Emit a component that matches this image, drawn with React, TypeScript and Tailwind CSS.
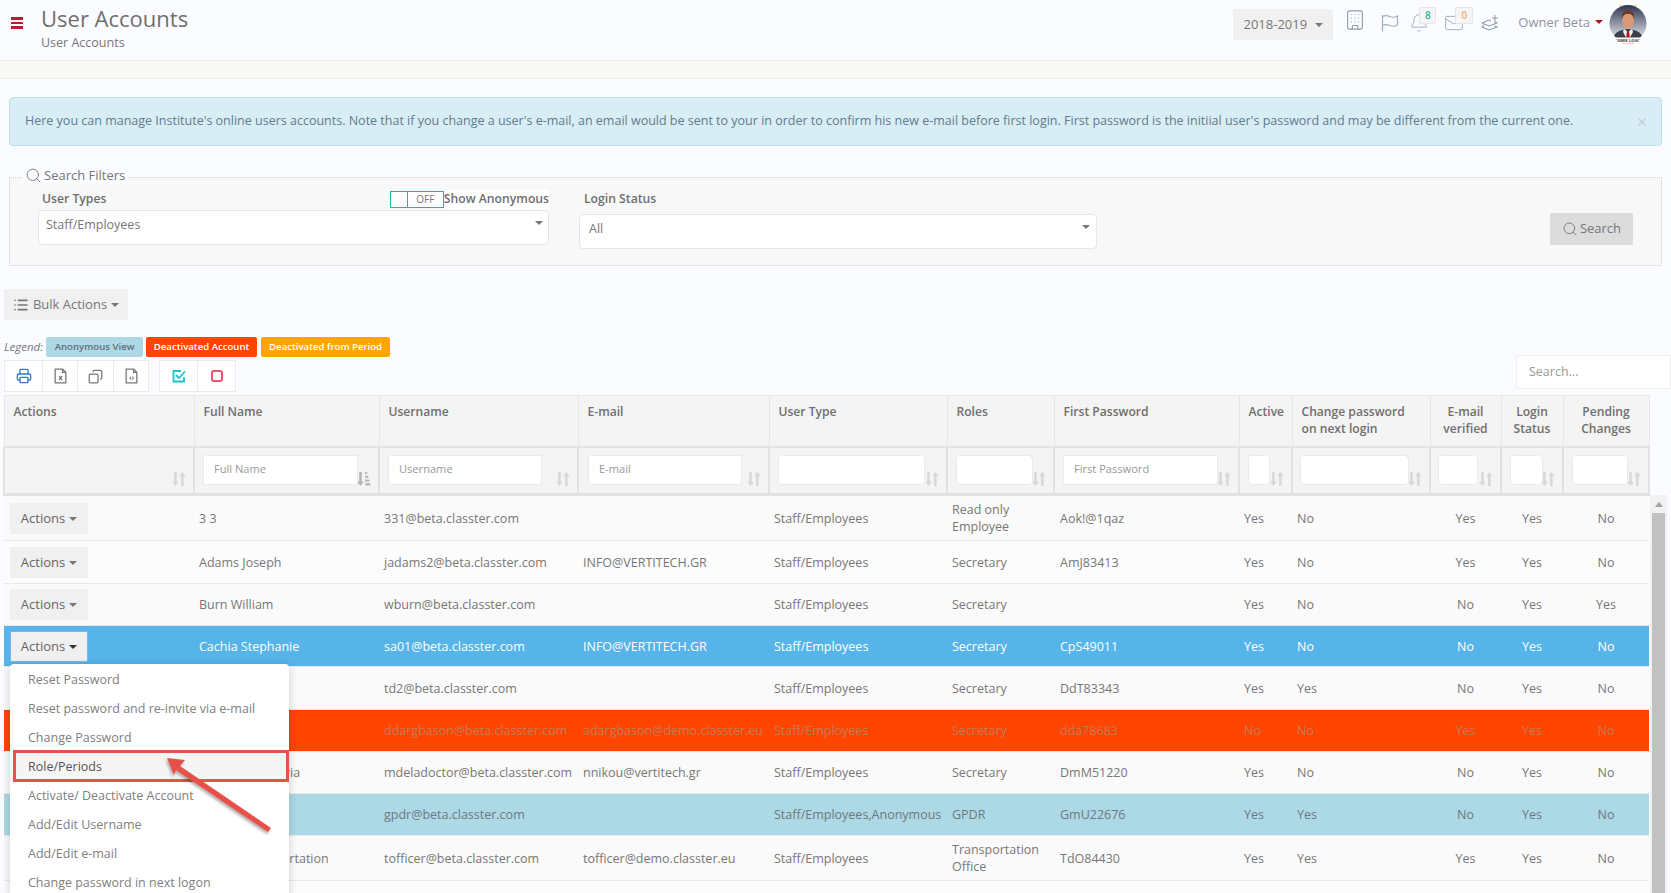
import React from "react";
import { Search, List, Printer, Copy, X, Building, Bell, Mail } from "lucide-react";

const cols = [190, 185, 199, 191, 178, 107, 185, 53, 138, 71, 62, 86];

type Row = { cells: string[]; h: string; kind?: "sel" | "red" | "blue" };

const rows: Row[] = [
  { h: "h-[46px]", cells: ["3 3", "331@beta.classter.com", "", "Staff/Employees", "Read only Employee", "Aok!@1qaz", "Yes", "No", "Yes", "Yes", "No"] },
  { h: "h-[43px]", cells: ["Adams Joseph", "jadams2@beta.classter.com", "INFO@VERTITECH.GR", "Staff/Employees", "Secretary", "AmJ83413", "Yes", "No", "Yes", "Yes", "No"] },
  { h: "h-[42px]", cells: ["Burn William", "wburn@beta.classter.com", "", "Staff/Employees", "Secretary", "", "Yes", "No", "No", "Yes", "Yes"] },
  { h: "h-[41px]", kind: "sel", cells: ["Cachia Stephanie", "sa01@beta.classter.com", "INFO@VERTITECH.GR", "Staff/Employees", "Secretary", "CpS49011", "Yes", "No", "No", "Yes", "No"] },
  { h: "h-[43px]", cells: ["", "td2@beta.classter.com", "", "Staff/Employees", "Secretary", "DdT83343", "Yes", "Yes", "No", "Yes", "No"] },
  { h: "h-[42px]", kind: "red", cells: ["", "ddargbason@beta.classter.com", "adargbason@demo.classter.eu", "Staff/Employees", "Secretary", "dda78683", "No", "No", "Yes", "Yes", "No"] },
  { h: "h-[42px]", cells: ["Deladoctor Maria", "mdeladoctor@beta.classter.com", "nnikou@vertitech.gr", "Staff/Employees", "Secretary", "DmM51220", "Yes", "No", "No", "Yes", "No"] },
  { h: "h-[42px]", kind: "blue", cells: ["", "gpdr@beta.classter.com", "", "Staff/Employees,Anonymous", "GPDR", "GmU22676", "Yes", "Yes", "No", "Yes", "No"] },
  { h: "h-[45px]", cells: ["Officer Transportation", "tofficer@beta.classter.com", "tofficer@demo.classter.eu", "Staff/Employees", "Transportation Office", "TdO84430", "Yes", "Yes", "Yes", "Yes", "No"] },
  { h: "h-[42px]", cells: ["", "", "", "", "", "", "", "", "", "", ""] },
];

const heads: { t: React.ReactNode; c?: boolean }[] = [
  { t: "Actions" }, { t: "Full Name" }, { t: "Username" }, { t: "E-mail" }, { t: "User Type" }, { t: "Roles" },
  { t: "First Password" }, { t: "Active" }, { t: <>Change password<br />on next login</> },
  { t: <>E-mail<br />verified</>, c: true }, { t: <>Login<br />Status</>, c: true }, { t: <>Pending<br />Changes</>, c: true },
];

const filters: { ph?: string; w: string; ml: string; r?: boolean }[] = [
  { w: "", ml: "" },
  { ph: "Full Name", w: "w-[155px]", ml: "ml-[8px]" },
  { ph: "Username", w: "w-[154px]", ml: "ml-[8px]" },
  { ph: "E-mail", w: "w-[154px]", ml: "ml-[9px]" },
  { w: "w-[147px]", ml: "ml-[8px]", r: true },
  { w: "w-[77px]", ml: "ml-[8px]", r: true },
  { ph: "First Password", w: "w-[155px]", ml: "ml-[8px]" },
  { w: "w-[22px]", ml: "ml-[8px]", r: true },
  { w: "w-[109px]", ml: "ml-[7px]", r: true },
  { w: "w-[40px]", ml: "ml-[7px]", r: true },
  { w: "w-[33px]", ml: "ml-[8px]", r: true },
  { w: "w-[56px]", ml: "ml-[8px]", r: true },
];

const menu = ["Reset Password", "Reset password and re-invite via e-mail", "Change Password", "Role/Periods", "Activate/ Deactivate Account", "Add/Edit Username", "Add/Edit e-mail", "Change password in next logon"];

function SortIcon({ active }: { active?: boolean }) {
  return (
    <svg width="14" height="16" viewBox="0 0 13 15" className={active ? "text-[#b5b5b5]" : "text-[#d8d8d8]"} fill="currentColor">
      {active ? (
        <>
          <path d="M2 1h2.4v9H6.4L3.2 14 0 10h2z" />
          <rect x="7.5" y="1" width="2" height="2" />
          <rect x="7.5" y="4.5" width="3" height="2" />
          <rect x="7.5" y="8" width="4" height="2" />
          <rect x="7.5" y="11.5" width="5" height="2" />
        </>
      ) : (
        <>
          <path d="M2 1h2.4v9H6.4L3.2 14 0 10h2z" />
          <path d="M8.4 14h2.4V5h2L9.6 1 6.6 5h1.8z" />
        </>
      )}
    </svg>
  );
}

function Caret({ cls }: { cls: string }) {
  return <span className={`inline-block w-0 h-0 border-x-[4px] border-x-transparent border-t-[4px] ${cls}`} />;
}

function DocIcon({ label }: { label: string }) {
  return (
    <svg width="13" height="16" viewBox="0 0 12 15" fill="none" stroke="#777" strokeWidth="1.2">
      <path d="M1 1h7l3 3v10H1z" />
      <path d="M8 1v3h3" />
      <text x="6" y="11.5" fontSize="6.5" fill="#666" stroke="none" textAnchor="middle" fontFamily="'Open Sans', sans-serif" fontWeight="700">{label}</text>
    </svg>
  );
}

function Avatar() {
  return (
    <svg width="40" height="39" viewBox="0 0 40 39" className="shrink-0">
      <defs>
        <linearGradient id="avbg" x1="0" y1="0" x2="0" y2="1">
          <stop offset="0" stopColor="#2e3550" />
          <stop offset="0.85" stopColor="#dfe2ea" />
        </linearGradient>
        <clipPath id="avclip"><circle cx="20" cy="18.5" r="18.5" /></clipPath>
      </defs>
      <path d="M11 1.2A18.5 18.5 0 0 1 29 1.2" stroke="#f2c94c" strokeWidth="1" fill="none" />
      <path d="M14 38.2h12" stroke="#f2c94c" strokeWidth="1" fill="none" />
      <g clipPath="url(#avclip)">
        <rect width="40" height="39" fill="url(#avbg)" />
        <path d="M5 36c0-8 5-11 15-12 10 1 15 4 15 12v3H5z" fill="#3c4048" />
        <path d="M16 24l4 3 4-3 1 3-5 9-5-9z" fill="#f2f2f2" />
        <path d="M19 26h2l1 8-2 3-2-3z" fill="#b5141e" />
        <ellipse cx="20" cy="15.5" rx="6" ry="8" fill="#d99a78" />
        <path d="M14 14c-1-6 3-9 6-9s7 3 6 9c-1-3-2-5-6-5s-5 2-6 5z" fill="#6b3c26" />
      </g>
      <rect x="5" y="32.5" width="30" height="5" fill="#fff" />
      <text x="20" y="36.6" fontSize="4" fontWeight="700" fill="#333" textAnchor="middle" fontFamily="'Open Sans', sans-serif">'GMIK LOGI'</text>
    </svg>
  );
}

export default function App() {
  return (
    <div className="relative h-[893px] w-[1671px] overflow-hidden bg-[#fafcff] text-[12.5px] text-[#777] font-['Open_Sans',sans-serif]">
      {/* Top bar */}
      <header className="flex h-[61px] items-start border-b border-[#eeeeec] bg-[#fbfcff]">
        <div className="ml-[11px] mt-[17px] flex w-[12px] flex-col gap-[2px]">
          <span className="h-[2.5px] bg-[#b5202f]" />
          <span className="h-[2.5px] bg-[#b5202f]" />
          <span className="h-[2.5px] bg-[#b5202f]" />
        </div>
        <div className="ml-[18px] mt-[3px]">
          <div className="text-[22px] leading-[31px] text-[#6f6f6f]">User Accounts</div>
          <div className="text-[12.5px] leading-[17px] text-[#777]">User Accounts</div>
        </div>
        <div className="ml-auto flex items-start">
          <button className="mt-[9px] flex h-[31px] w-[100px] items-center justify-center gap-[8px] bg-[#f0f0f0] text-[13px] text-[#777]">
            2018-2019 <Caret cls="border-t-[#777]" />
          </button>
          <Building className="ml-[11px] mt-[9px] text-[#8d9cab]" size={22} strokeWidth={1.2} />
          <svg className="ml-[15px] mt-[14px]" width="18" height="18" viewBox="0 0 18 18" fill="none" stroke="#9fb0c0" strokeWidth="1.2">
            <path d="M1.5 1v16.5" />
            <path d="M1.5 2.5c3-1.5 5-1 7 0s5 1 8-0.5v9c-3 1.5-6 1.5-8 0.5s-4-1.5-7 0" />
          </svg>
          <div className="relative ml-[10px] mt-[13px]">
            <Bell className="text-[#9fb0c0]" size={20} strokeWidth={1.2} />
            <span className="absolute left-[10px] top-[-6px] flex h-[17px] w-[17px] items-center justify-center rounded-[2px] border border-[#e6e6e6] bg-[#f5f5f5] text-[10px] font-semibold text-[#2bb5a0]">8</span>
          </div>
          <div className="relative ml-[15px] mt-[13px]">
            <Mail className="text-[#9fb0c0]" size={20} strokeWidth={1.2} />
            <span className="absolute left-[11px] top-[-6px] flex h-[17px] w-[18px] items-center justify-center rounded-[2px] border border-[#e6e6e6] bg-[#f5f5f5] text-[10px] font-semibold text-[#f5a96b]">0</span>
          </div>
          <svg className="ml-[17px] mt-[14px]" width="18" height="19" viewBox="0 0 18 19" fill="none" stroke="#8d9cab" strokeWidth="1.1">
            <path d="M1 9l7-3 2 1M1 9l7 3 8-3-3-1.5M1 13l7 3 8-3-2.5-1.2M3 11l-2 2" />
            <path d="M14 1v6M11 4h6" />
          </svg>
          <span className="ml-[19px] mt-[12px] text-[13px] leading-[20px] text-[#8f949c]">Owner Beta</span>
          <span className="ml-[5px] mt-[20px] flex"><Caret cls="border-t-[#b5141e]" /></span>
          <div className="ml-[5px] mr-[23px] mt-[5px]"><Avatar /></div>
        </div>
      </header>
      <div className="h-[18px] border-b border-[#eeeeec] bg-[#f8f8f5]" />

      {/* Alert */}
      <div className="mx-[9px] mt-[18px] flex h-[49px] items-center justify-between rounded-[4px] border border-[#bde0ec] bg-[#d9edf6] pl-[15px] pr-[12px] text-[12.5px] text-[#5f7c8c]">
        <span>Here you can manage Institute's online users accounts. Note that if you change a user's e-mail, an email would be sent to your in order to confirm his new e-mail before first login. First password is the initiial user's password and may be different from the current one.</span>
        <X size={14} className="text-[#c0d3dc]" strokeWidth={2.5} />
      </div>

      {/* Filters */}
      <fieldset className="mx-[9px] mt-[21px] h-[99px] border border-dotted border-[#cfcfcf] bg-[#f8f8f8] px-0">
        <legend className="ml-[12px] flex -translate-y-[2px] items-center gap-[2px] bg-[#fafcff] px-[3px] text-[13px] leading-[20px] text-[#777]">
          <Search size={17} strokeWidth={1.3} /> Search Filters
        </legend>
        <div className="flex items-start">
          <div className="ml-[28px] mt-[3px] w-[511px]">
            <div className="flex h-[19px] items-center justify-between">
              <span className="ml-[4px] text-[12.2px] font-semibold text-[#6f6f6f]">User Types</span>
              <div className="flex items-center">
                <div className="flex h-[17px] w-[54px] border border-[#1fb39a] bg-white">
                  <span className="w-[17px] border-r border-[#1fb39a]" />
                  <span className="flex-1 text-center text-[10px] leading-[15px] text-[#777]">OFF</span>
                </div>
                <span className="bg-white text-[12.2px] font-semibold text-[#6f6f6f]">Show Anonymous</span>
              </div>
            </div>
            <div className="mt-[1px] flex h-[35px] items-start justify-between rounded-[4px] border border-[#e4e6ea] bg-white pl-[7px] pr-[5px] pt-[5px]">
              <span>Staff/Employees</span>
              <span className="mt-[5px] flex"><Caret cls="border-t-[#777]" /></span>
            </div>
          </div>
          <div className="ml-[30px] mt-[3px] w-[518px]">
            <div className="ml-[5px] h-[19px] text-[12.2px] font-semibold text-[#6f6f6f]">Login Status</div>
            <div className="mt-[5px] flex h-[35px] items-start justify-between rounded-[4px] border border-[#e4e6ea] bg-white pl-[9px] pr-[6px] pt-[5px]">
              <span>All</span>
              <span className="mt-[5px] flex"><Caret cls="border-t-[#777]" /></span>
            </div>
          </div>
          <button className="ml-[453px] mt-[26px] flex h-[32px] w-[83px] items-center justify-center gap-[2px] bg-[#dcdcdc] text-[13px] text-[#777]">
            <Search size={16} strokeWidth={1.4} /> Search
          </button>
        </div>
      </fieldset>

      {/* Bulk actions */}
      <button className="ml-[4px] mt-[23px] flex h-[31px] w-[124px] items-center justify-center gap-[4px] bg-[#f0f0f0] text-[13px] text-[#777]">
        <List size={16} strokeWidth={2.4} /> Bulk Actions <Caret cls="border-t-[#777]" />
      </button>

      {/* Legend + tools + search */}
      <div className="mt-[17px] flex h-[54px] items-start justify-between">
        <div className="ml-[4px]">
          <div className="flex h-[20px] items-center">
            <span className="text-[11.5px] italic text-[#777]">Legend:</span>
            <span className="ml-[3px] flex h-[20px] w-[97px] items-center justify-center rounded-[2px] bg-[#add8e6] text-[9.6px] font-semibold text-[#5f6f78]">Anonymous View</span>
            <span className="ml-[3px] flex h-[20px] w-[111px] items-center justify-center rounded-[2px] bg-[#ff4500] text-[9.6px] font-semibold text-white">Deactivated Account</span>
            <span className="ml-[4px] flex h-[20px] w-[129px] items-center justify-center rounded-[2px] bg-[#ffa500] text-[9.6px] font-semibold text-white">Deactivated from Period</span>
          </div>
          <div className="mt-[3px] flex h-[32px]">
            <div className="flex border border-[#ececec] bg-white">
              <span className="flex w-[38px] items-center justify-center border-r border-[#ececec]"><Printer size={16} className="text-[#3a79c9]" /></span>
              <span className="flex w-[35px] items-center justify-center border-r border-[#ececec]"><DocIcon label="x" /></span>
              <span className="flex w-[36px] items-center justify-center border-r border-[#ececec]"><Copy size={15} className="-scale-x-100 text-[#777]" /></span>
              <span className="flex w-[34px] items-center justify-center"><DocIcon label="‹›" /></span>
            </div>
            <div className="ml-[10px] flex border border-[#ececec] bg-white">
              <span className="flex w-[38px] items-center justify-center border-r border-[#ececec]">
                <svg width="14" height="14" viewBox="0 0 14 14" fill="none" stroke="#22bfcc" strokeWidth="1.8"><path d="M12 8v4.5H1.5V2H9" /><path d="M4 6l3 3 6-6.5" /></svg>
              </span>
              <span className="flex w-[37px] items-center justify-center">
                <span className="h-[12px] w-[12px] rounded-[3px] border-2 border-[#f0506e]" />
              </span>
            </div>
          </div>
        </div>
        <div className="mt-[18px] flex h-[34px] w-[155px] items-center border border-[#eeeeee] bg-white pl-[12px] text-[12.5px] text-[#999]">Search...</div>
      </div>

      {/* Table */}
      <div className="mt-[4px] flex pl-[3px]">
        <table className="w-[1645px] table-fixed border-collapse">
          <colgroup>
            {cols.map((w, i) => <col key={i} style={{ width: w }} />)}
          </colgroup>
          <thead>
            <tr className="h-[51px] bg-[#f4f4f4]">
              {heads.map((h, i) => (
                <th key={i} className={`border border-[#e6e6e6] px-[9px] pt-[7px] align-top text-[12.1px] font-semibold leading-[17px] text-[#6f6f6f] ${h.c ? "text-center" : "text-left"}`}>{h.t}</th>
              ))}
            </tr>
            <tr className="h-[48px] bg-[#f4f4f4]">
              {filters.map((f, i) => (
                <th key={i} className="border-x-2 border-b-[3px] border-t-2 border-[#e2e2e2] p-0 font-normal">
                  <div className="relative h-[43px]">
                    {f.w && (
                      <div className={`absolute left-0 top-[6px] flex h-[30px] items-center rounded-[2px] border border-[#ebebeb] bg-white pl-[10px] text-[11.1px] text-[#999] ${f.w} ${f.ml} ${f.r ? "rounded-[4px]" : ""}`}>{f.ph}</div>
                    )}
                    <span className="absolute bottom-[5px] right-[7px] flex"><SortIcon active={i === 1} /></span>
                  </div>
                </th>
              ))}
            </tr>
          </thead>
          <tbody>
            {rows.map((r, idx) => {
              const bg = r.kind === "sel" ? "bg-[#56b4e9] text-white" : r.kind === "red" ? "bg-[#ff4500] text-[#c47a58]" : r.kind === "blue" ? "bg-[#add8e6] text-[#6b7a80]" : idx % 2 ? "bg-[#fcfcfc]" : "bg-[#fafafa]";
              return (
                <tr key={idx} className={`${r.h} border-b border-[#e8e8e8] ${bg}`}>
                  <td className="pl-[6px]">
                    {idx < 9 && (
                      <button className={`flex h-[31px] w-[78px] items-center justify-center gap-[4px] bg-[#f0f0f0] pt-[1px] text-[13px] text-[#666] ${r.kind === "sel" ? "border border-[#7fb2ef] text-[#444]" : ""}`}>
                        Actions <Caret cls={r.kind === "sel" ? "border-t-[#333]" : "border-t-[#777]"} />
                      </button>
                    )}
                  </td>
                  {r.cells.map((c, i) => (
                    <td key={i} className={`text-[12.5px] leading-[17px] ${i === 5 ? "px-[6px]" : "px-[5px]"} ${i >= 8 ? "text-center" : ""}`}>
                      <span className={i === 2 || i === 3 ? "whitespace-nowrap" : ""}>{c}</span>
                    </td>
                  ))}
                </tr>
              );
            })}
          </tbody>
        </table>
        <div className="mt-[100px] h-[400px] w-[17px] shrink-0 bg-[#f1f1f1]">
          <div className="mx-auto mt-[7px] h-0 w-0 border-x-[4px] border-b-[5px] border-x-transparent border-b-[#a3a3a3]" />
          <div className="mx-auto mt-[6px] h-[380px] w-[13px] bg-[#c1c1c1]" />
        </div>
      </div>

      {/* Dropdown menu */}
      <div className="absolute left-[10px] top-[664px] h-[240px] w-[279px] rounded-[4px] bg-white pt-[2px] shadow-[0_2px_10px_rgba(0,0,0,0.18)]">
        {menu.map((m, i) => (
          <div key={m} className={`flex h-[29px] items-center pl-[18px] text-[12.5px] ${i === 3 ? "bg-[#f5f5f5] text-[#555]" : "text-[#808080]"}`}>{m}</div>
        ))}
      </div>

      {/* Annotation */}
      <div className="absolute left-[13px] top-[750px] h-[32px] w-[276px] border-[3px] border-[#e8504a]" />
      <svg className="absolute left-[150px] top-[745px]" width="135" height="100" viewBox="0 0 135 100">
        <defs>
          <filter id="sh" x="-20%" y="-20%" width="140%" height="140%">
            <feDropShadow dx="-1" dy="2" stdDeviation="1.5" floodColor="#000" floodOpacity="0.35" />
          </filter>
        </defs>
        <g filter="url(#sh)" fill="#e8504a">
          <path d="M17 13L35 15L30 21L121 83L118 87L26 25L24 30Z" />
        </g>
      </svg>
    </div>
  );
}
